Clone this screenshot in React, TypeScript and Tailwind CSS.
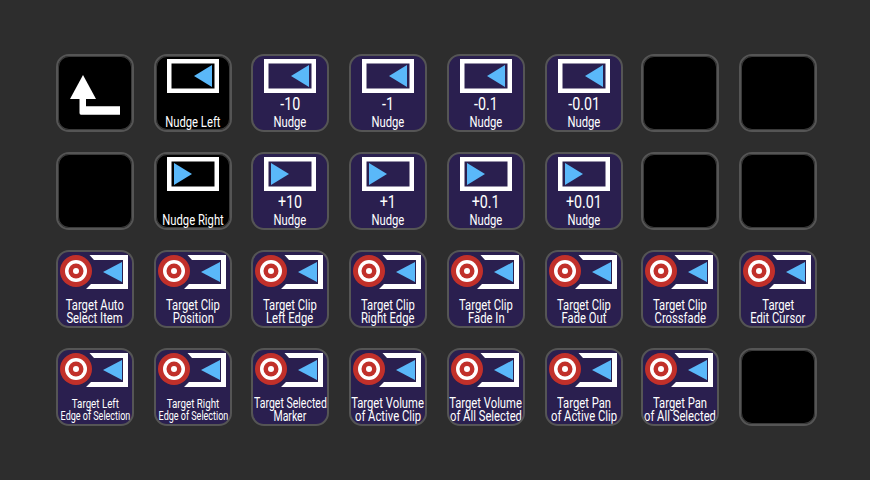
import React from 'react';

function NudgeIcon({ dir }: { dir: 'left' | 'right' }) {
  return (
    <svg width="74" height="38" viewBox="0 0 74 38" className="shrink-0">
      <rect x="13.25" y="5.25" width="47.5" height="29.5" fill="none" stroke="#fff" strokeWidth="4.5" />
      {dir === 'left' ? (
        <polygon points="38,20 56,9 56,31" fill="#5ab8f9" />
      ) : (
        <polygon points="18,9 36,20 18,31" fill="#5ab8f9" />
      )}
    </svg>
  );
}

function TargetIcon() {
  return (
    <svg width="74" height="38" viewBox="0 0 74 38" className="shrink-0">
      {/* frame runs behind the target and ends on a slant */}
      <polygon points="31.5,3 70,3 70,37 28,37 33,32 65,32 65,8 36,8" fill="#fff" />
      <polygon points="45,20 64,10 64,30" fill="#5ab8f9" />
      <circle cx="18" cy="19" r="16" fill="#c1302a" />
      <circle cx="18" cy="19" r="11" fill="#fff" />
      <circle cx="18" cy="19" r="7.5" fill="#c1302a" />
      <circle cx="18" cy="19" r="3" fill="#fff" />
    </svg>
  );
}

function ArrowIcon() {
  return (
    <svg width="74" height="74" viewBox="0 0 74 74">
      <polygon points="25,19 12,43 38,43" fill="#fff" />
      <path d="M21.5 40 V57 Q21.5 58.7 23 58.7 H62 V50.3 H28 V40 Z" fill="#fff" />
    </svg>
  );
}

type KeyDef = {
  kind: 'empty' | 'arrow' | 'nudge' | 'target';
  dir?: 'left' | 'right';
  big?: string;
  lines?: string[];
  black?: boolean;
  // text size class per line, when the label had to shrink to fit
  sizes?: string[];
};

const nudge = (dir: 'left' | 'right', big: string): KeyDef => ({ kind: 'nudge', dir, big, lines: ['Nudge'] });
const target = (a: string, b: string, sizes?: string[]): KeyDef => ({ kind: 'target', lines: [a, b], sizes });
const edgeSizes = ['text-[13px]', 'text-[12px]'];

const keys: KeyDef[] = [
  { kind: 'arrow' },
  { kind: 'nudge', dir: 'left', lines: ['Nudge Left'], black: true },
  nudge('left', '-10'),
  nudge('left', '-1'),
  nudge('left', '-0.1'),
  nudge('left', '-0.01'),
  { kind: 'empty' },
  { kind: 'empty' },
  { kind: 'empty' },
  { kind: 'nudge', dir: 'right', lines: ['Nudge Right'], black: true },
  nudge('right', '+10'),
  nudge('right', '+1'),
  nudge('right', '+0.1'),
  nudge('right', '+0.01'),
  { kind: 'empty' },
  { kind: 'empty' },
  target('Target Auto', 'Select Item'),
  target('Target Clip', 'Position'),
  target('Target Clip', 'Left Edge'),
  target('Target Clip', 'Right Edge'),
  target('Target Clip', 'Fade In'),
  target('Target Clip', 'Fade Out'),
  target('Target Clip', 'Crossfade'),
  target('Target', 'Edit Cursor'),
  target('Target Left', 'Edge of Selection', edgeSizes),
  target('Target Right', 'Edge of Selection', edgeSizes),
  target('Target Selected', 'Marker', ['text-[14px]', 'text-[14px]']),
  target('Target Volume', 'of Active Clip'),
  target('Target Volume', 'of All Selected'),
  target('Target Pan', 'of Active Clip'),
  target('Target Pan', 'of All Selected'),
  { kind: 'empty' },
];

function Key({ def }: { def: KeyDef }) {
  const purple = def.kind === 'target' || (def.kind === 'nudge' && !def.black);
  return (
    <div
      className={`flex h-[78px] w-[78px] flex-col items-center overflow-hidden rounded-[13px] border-2 border-[#555555] text-white ${
        purple ? 'bg-[#2a1f4f]' : 'bg-black shadow-[inset_0_0_0_1px_#3a3a3a]'
      }`}
    >
      {def.kind === 'arrow' && <ArrowIcon />}
      {def.kind === 'nudge' && <NudgeIcon dir={def.dir!} />}
      {def.kind === 'target' && <TargetIcon />}
      {def.big && (
        <div className="mt-[1px] mb-[3px] h-[18px] scale-x-75 whitespace-nowrap text-[19px] leading-[18px]">{def.big}</div>
      )}
      {def.kind === 'nudge' && def.black && <div className="h-[22px] shrink-0" />}
      {def.kind === 'target' && <div className="h-[9px] shrink-0" />}
      {def.lines?.map((line, i) => (
        <div
          key={line}
          className={`h-[13px] shrink-0 scale-x-75 whitespace-nowrap leading-[13px] ${def.sizes ? def.sizes[i] : 'text-[15px]'}`}
        >
          {line}
        </div>
      ))}
    </div>
  );
}

export default function App() {
  return (
    <div className="h-[480px] w-[870px] overflow-hidden bg-[#2d2d2d] pl-[56px] pt-[54px] font-['Roboto',sans-serif]">
      <div className="grid grid-cols-[98px_97px_98px_98px_98px_96px_98px_78px] grid-rows-[98px_98px_98px_78px]">
        {keys.map((def, i) => (
          <Key key={i} def={def} />
        ))}
      </div>
    </div>
  );
}
